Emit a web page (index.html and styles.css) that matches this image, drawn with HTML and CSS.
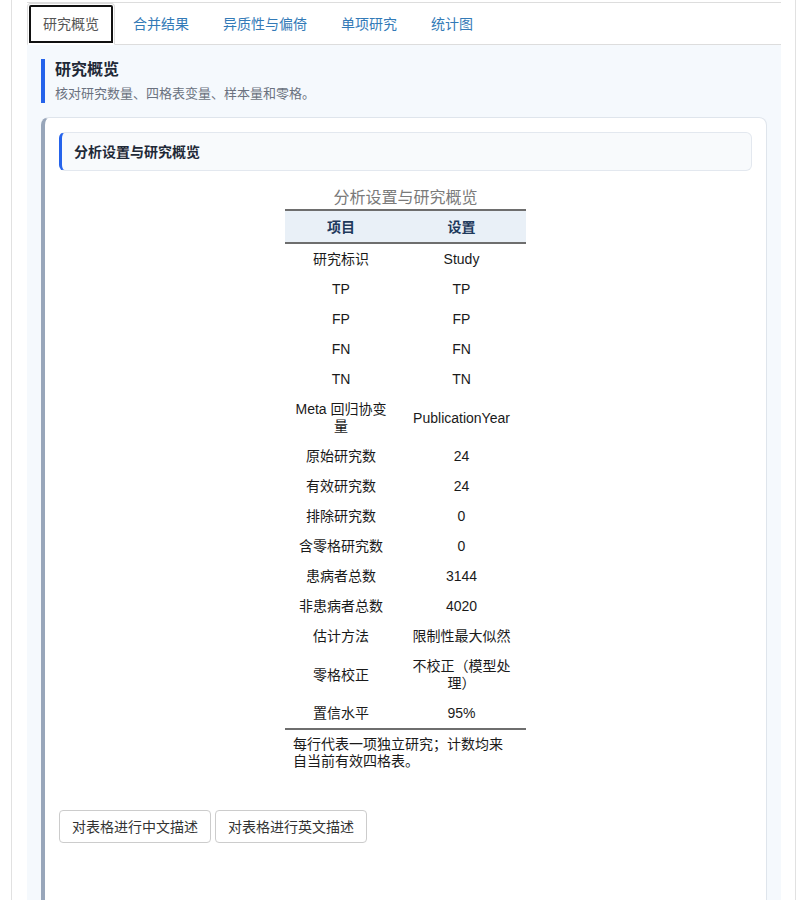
FILE: index.html
```html
<!DOCTYPE html>
<html lang="zh-CN">
<head>
<meta charset="utf-8">
<title>研究概览</title>
<link rel="stylesheet" href="styles.css">
</head>
<body>
<div class="panel">
  <div class="wrap">
    <ul class="tabs">
      <li class="active"><a href="#">研究概览</a></li>
      <li><a href="#">合并结果</a></li>
      <li><a href="#">异质性与偏倚</a></li>
      <li><a href="#">单项研究</a></li>
      <li><a href="#">统计图</a></li>
    </ul>
    <div class="pane">
      <div class="sec-head">
        <div class="sec-title">研究概览</div>
        <div class="sec-sub">核对研究数量、四格表变量、样本量和零格。</div>
      </div>
      <div class="card">
        <div class="card-head">分析设置与研究概览</div>
        <div class="tbl-wrap">
          <table class="tbl">
            <caption>分析设置与研究概览</caption>
            <colgroup><col class="c1"><col class="c2"></colgroup>
            <thead>
              <tr><th>项目</th><th>设置</th></tr>
            </thead>
            <tbody>
              <tr><td>研究标识</td><td>Study</td></tr>
              <tr><td>TP</td><td>TP</td></tr>
              <tr><td>FP</td><td>FP</td></tr>
              <tr><td>FN</td><td>FN</td></tr>
              <tr><td>TN</td><td>TN</td></tr>
              <tr><td>Meta 回归协变量</td><td>PublicationYear</td></tr>
              <tr><td>原始研究数</td><td>24</td></tr>
              <tr><td>有效研究数</td><td>24</td></tr>
              <tr><td>排除研究数</td><td>0</td></tr>
              <tr><td>含零格研究数</td><td>0</td></tr>
              <tr><td>患病者总数</td><td>3144</td></tr>
              <tr><td>非患病者总数</td><td>4020</td></tr>
              <tr><td>估计方法</td><td>限制性最大似然</td></tr>
              <tr><td>零格校正</td><td>不校正（模型处理）</td></tr>
              <tr class="last"><td>置信水平</td><td>95%</td></tr>
            </tbody>
            <tfoot>
              <tr><td colspan="2" class="note">每行代表一项独立研究；计数均来自当前有效四格表。</td></tr>
            </tfoot>
          </table>
        </div>
        <div class="btns">
          <button class="btn" type="button">对表格进行中文描述</button>
          <button class="btn" type="button">对表格进行英文描述</button>
        </div>
      </div>
    </div>
  </div>
</div>
</body>
</html>
```

FILE: styles.css
```css
html, body {
  margin: 0;
  padding: 0;
  background: #ffffff;
}

body {
  font-family: "Liberation Sans", "Noto Sans CJK SC", sans-serif;
  font-size: 14px;
  line-height: 20px;
  color: #333333;
}

.panel {
  margin: 0 4px 0 11px;
  padding: 2px 14px 0 15px;
  border-left: 1px solid #e1e1e1;
  border-right: 1px solid #e1e1e1;
  min-height: 898px;
}

.wrap {
  border-top: 1px solid #dddddd;
}

.tabs {
  list-style: none;
  margin: 0;
  padding: 0;
  display: flex;
  border-bottom: 1px solid #dddddd;
}

.tabs li {
  margin: 0 2px -1px 0;
}

.tabs a {
  display: block;
  padding: 10px 15px;
  line-height: 20px;
  border: 1px solid transparent;
  border-radius: 4px 4px 0 0;
  color: #337ab7;
  text-decoration: none;
}

.tabs .active a {
  color: #555555;
  background: #ffffff;
  border-color: #dddddd #dddddd transparent;
  outline: 2px solid #111111;
  outline-offset: -4px;
}

.pane {
  background: #f5f9fd;
  padding: 14px 14px 0 14px;
}

.sec-head {
  border-left: 4px solid #2563eb;
  padding-left: 10px;
}

.sec-title {
  font-size: 16px;
  line-height: 22px;
  font-weight: bold;
  color: #1f2937;
  margin-bottom: 4px;
}

.sec-sub {
  font-size: 13px;
  line-height: 18px;
  color: #6b7280;
}

.card {
  margin-top: 14px;
  background: #ffffff;
  border: 1px solid #dfe5ec;
  border-left: 4px solid #98a6ba;
  border-radius: 8px;
  padding: 14px 14px 90px 14px;
}

.card-head {
  background: #f8fafc;
  border: 1px solid #e3e8ef;
  border-left: 3px solid #2563eb;
  border-radius: 6px;
  padding: 9px 12px 8px 12px;
  font-weight: bold;
  color: #1f2937;
}

.tbl-wrap {
  margin-top: 16px;
}

.tbl {
  margin: 0 auto;
  width: 241px;
  table-layout: fixed;
  border-collapse: separate;
  border-spacing: 0;
  color: #1a1a1a;
}

.tbl .c1 {
  width: 112px;
}

.tbl .c2 {
  width: 129px;
}

.tbl caption {
  font-size: 16px;
  line-height: 20px;
  color: #7a7a7a;
  padding-top: 1px;
  padding-bottom: 1px;
}

.tbl th {
  background: #e9f0f7;
  color: #1e3a5c;
  font-weight: bold;
  padding: 6px 8px 5px 8px;
  line-height: 20px;
  border-top: 2px solid #6e6e6e;
  border-bottom: 2px solid #6e6e6e;
  text-align: center;
}

.tbl td {
  padding: 7px 8px 6px 8px;
  line-height: 17px;
  text-align: center;
  vertical-align: middle;
}

.tbl .last td {
  border-bottom: 2px solid #6e6e6e;
}

.tbl .note {
  text-align: left;
  padding: 6px 12px 4px 8px;
  line-height: 17px;
  color: #1a1a1a;
}

.btns {
  margin-top: 36px;
}

.btn {
  font-family: "Liberation Sans", "Noto Sans CJK SC", sans-serif;
  font-size: 14px;
  line-height: 20px;
  padding: 6px 12px 5px 12px;
  background: #ffffff;
  color: #333333;
  border: 1px solid #cccccc;
  border-radius: 4px;
  margin: 0;
}
```
